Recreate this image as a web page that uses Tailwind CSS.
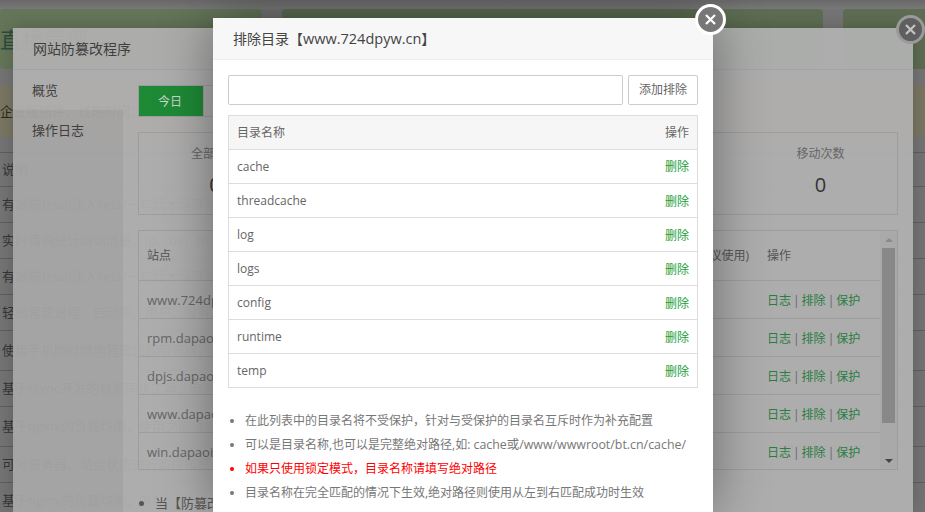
<!DOCTYPE html>
<html>
<head>
  <title>网站防篡改程序</title>
  <script src="https://cdn.jsdelivr.net/npm/@tailwindcss/browser@4"></script>
  <meta name="viewport" content="width=device-width, initial-scale=1.0">
</head>

<body class="relative w-[925px] h-[512px] overflow-hidden bg-[#747474] font-['Open_Sans','Noto_Sans_CJK_SC',sans-serif] text-[12px]">

  <!-- Page behind the dim layer -->
  <div class="w-full">
    <div class="h-[9px] bg-gradient-to-b from-[#686868] to-[#787878]"></div>
    <div class="flex gap-5 h-[60px] text-[#2a4d3a]">
      <div class="w-[262px] shrink-0 rounded bg-[#647559] overflow-hidden text-[22px] pt-[17px] leading-[26px] whitespace-nowrap">直播管理</div>
      <div class="w-[541px] shrink-0 rounded bg-[#5d6c52]"></div>
      <div class="w-[100px] shrink-0 rounded bg-[#5d6c52]"></div>
    </div>
    <div class="mt-4 h-[52px] bg-[#7a7663] text-[#2e2a1c] text-[13px] leading-[52px] whitespace-nowrap">企业版插件，过期时间：2021/05/20</div>
    <div class="text-[13px] text-[#363636] whitespace-nowrap">
      <div class="h-4 border-b border-[#5e5e5e]"></div>
      <div class="h-[34px] leading-[33px] border-b border-[#5e5e5e] pl-0.5">说明</div>
      <div class="h-9 leading-[35px] border-b border-[#5e5e5e] pl-0.5">有效防止sql注入/xss/一句话木马等常见渗透攻击</div>
      <div class="h-9 leading-[35px] border-b border-[#5e5e5e] pl-0.5">实时精确统计网站流量、ip、uv、pv、请求</div>
      <div class="h-9 leading-[35px] border-b border-[#5e5e5e] pl-0.5">有效防止sql注入/xss/一句话木马等常见渗透攻击</div>
      <div class="h-9 leading-[35px] border-b border-[#5e5e5e] pl-0.5">轻松管理进程、启动项、用户、服务、计划任务</div>
      <div class="h-10 leading-[39px] border-b border-[#5e5e5e] pl-0.5">使用手机随时随地管理您的服务器，安全便捷</div>
      <div class="h-9 leading-[35px] border-b border-[#5e5e5e] pl-0.5">基于rsync开发的数据同步工具，支持多节点</div>
      <div class="h-10 leading-[39px] border-b border-[#5e5e5e] pl-0.5">基于nginx的负载均衡，使用之前请先安装nginx</div>
      <div class="h-9 leading-[35px] border-b border-[#5e5e5e] pl-0.5">可对服务器、站点状态进行监控报警</div>
      <div class="h-9 leading-[35px] pl-0.5">基于nginx的负载均衡，0/1</div>
    </div>
  </div>

  <div class="absolute left-[13px] top-[28px] w-[900px] h-[484px] bg-[#b1b1b1]/93 shadow-[0_0_16px_rgba(0,0,0,0.2)] flex flex-col">
    <div class="h-[42px] shrink-0 border-b border-[#a4a4a4] pl-5 leading-[41px] text-[14px] text-[#3f3f3f]">网站防篡改程序</div>
    <div class="flex flex-1 min-h-0">
      <div class="w-[110px] shrink-0 text-[13px] text-[#3f3f3f]">
        <div class="h-10 leading-10 pl-[19px]">概览</div>
        <div class="h-[402px] pl-[19px] leading-10 bg-black/5">操作日志</div>
      </div>
      <div class="flex-1 min-w-0 pl-[15px] pr-[15px] pt-[15px]">
        <div class="flex h-8">
          <div class="w-[66px] pr-0.5 border border-[#9d9d9d] bg-[#1f8a36] text-[#c9d6cb] text-[12px] text-center leading-[32px]">今日</div>
          <div class="w-[66px] border border-[#9d9d9d] border-l-0"></div>
        </div>
        <div class="mt-[15px] h-[83px] border border-[#9d9d9d] flex text-center">
          <div class="w-[152px] pt-[11px]">
            <div class="text-[12px] text-[#666] leading-5">全部次数</div>
            <div class="text-[20px] text-[#333] leading-7 mt-[7px]">0</div>
          </div>
          <div class="flex-1"></div>
          <div class="w-[153px] pt-[11px]">
            <div class="text-[12px] text-[#666] leading-5">移动次数</div>
            <div class="text-[20px] text-[#333] leading-7 mt-[7px]">0</div>
          </div>
        </div>
        <div class="mt-[15px] h-[240px] border border-[#9d9d9d] flex">
          <div class="flex-1 min-w-0 text-[#666]">
            <div class="h-[50px] flex items-center justify-between pl-2 text-[12px] text-[#555] border-b border-[#9d9d9d]">
              <span>站点</span>
              <span class="flex gap-[18px] pr-[20px]"><span>(建议使用)</span><span class="w-[93px]">操作</span></span>
            </div>
            <div class="h-[38px] pt-[3px] flex items-center justify-between pl-2 text-[13px] border-b border-[#9d9d9d]">
              <span>www.724dpyw.cn</span>
              <span class="w-[113px] text-[#2a7d41] text-[12px]">日志<span class="mx-[2px] text-[#666]">|</span>排除<span class="mx-[2px] text-[#666]">|</span>保护</span>
            </div>
            <div class="h-[38px] pt-[3px] flex items-center justify-between pl-2 text-[13px] border-b border-[#9d9d9d]">
              <span>rpm.dapaoit.com</span>
              <span class="w-[113px] text-[#2a7d41] text-[12px]">日志<span class="mx-[2px] text-[#666]">|</span>排除<span class="mx-[2px] text-[#666]">|</span>保护</span>
            </div>
            <div class="h-[38px] pt-[3px] flex items-center justify-between pl-2 text-[13px] border-b border-[#9d9d9d]">
              <span>dpjs.dapaoit.com</span>
              <span class="w-[113px] text-[#2a7d41] text-[12px]">日志<span class="mx-[2px] text-[#666]">|</span>排除<span class="mx-[2px] text-[#666]">|</span>保护</span>
            </div>
            <div class="h-[38px] pt-[3px] flex items-center justify-between pl-2 text-[13px] border-b border-[#9d9d9d]">
              <span>www.dapaoit.com</span>
              <span class="w-[113px] text-[#2a7d41] text-[12px]">日志<span class="mx-[2px] text-[#666]">|</span>排除<span class="mx-[2px] text-[#666]">|</span>保护</span>
            </div>
            <div class="h-9 pt-1 flex items-center justify-between pl-2 text-[13px]">
              <span>win.dapaoit.com</span>
              <span class="w-[113px] text-[#2a7d41] text-[12px]">日志<span class="mx-[2px] text-[#666]">|</span>排除<span class="mx-[2px] text-[#666]">|</span>保护</span>
            </div>
          </div>
          <!-- Scrollbar -->
          <div class="w-[17px] shrink-0 bg-[#a9a9a9] flex flex-col items-center">
            <div class="h-[17px] flex items-center justify-center">
              <svg width="8" height="4" viewBox="0 0 8 4"><path d="M4 0L8 4H0z" fill="#8a8a8a"/></svg>
            </div>
            <div class="w-[13px] h-[175px] bg-[#888888]"></div>
            <div class="flex-1"></div>
            <div class="h-[17px] flex items-center justify-center">
              <svg width="8" height="4" viewBox="0 0 8 4"><path d="M0 0H8L4 4z" fill="#444"/></svg>
            </div>
          </div>
        </div>
        <ul class="mt-6 pl-[17px] list-disc text-[13px] text-[#555]">
          <li>当【防篡改程序】开启后</li>
        </ul>
      </div>
    </div>
  </div>

  <!-- Panel close button -->
  <div class="absolute left-[896px] top-[15px] w-[29px] h-[29px] rounded-full bg-[#5f5f5f] border-[3px] border-[#9a9a9a] flex items-center justify-center">
    <svg width="13" height="13" viewBox="0 0 13 13"><path d="M2 2L11 11M11 2L2 11" stroke="#c4c4c4" stroke-width="2.2"/></svg>
  </div>

  <!-- Exclude directory dialog -->
  <div class="absolute left-[213px] top-[18px] w-[500px] h-[494px] bg-white shadow-[0_0_50px_rgba(0,0,0,0.4)]">
    <div class="h-[42px] bg-[#f7f7f7] border-b border-[#eeeeee] pl-5 leading-[41px] text-[14px] text-[#444]">排除目录【<span class="text-[14.5px]">www.724dpyw.cn</span>】</div>
    <div class="px-[15px] pt-[15px]">
      <div class="flex gap-[5px] h-[30px]">
        <input type="text" class="flex-1 min-w-0 border border-[#cccccc] rounded-[2px]">
        <button class="w-[70px] border border-[#cccccc] rounded-[2px] bg-white text-[#666] text-[12px]">添加排除</button>
      </div>
      <table class="mt-[10px] w-full border border-[#dddddd] border-collapse text-[#666] text-[12px]">
        <thead>
          <tr class="h-[34px] bg-[#f6f6f6] border-b border-[#dddddd]">
            <th class="font-normal text-left pl-2">目录名称</th>
            <th class="font-normal text-right pr-2">操作</th>
          </tr>
        </thead>
        <tbody>
          <tr class="h-[34px] border-b border-[#dddddd]"><td class="pl-2">cache</td><td class="text-right pr-2 text-[#1c9e36]">删除</td></tr>
          <tr class="h-[34px] border-b border-[#dddddd]"><td class="pl-2">threadcache</td><td class="text-right pr-2 pt-0.5 text-[#1c9e36]">删除</td></tr>
          <tr class="h-[34px] border-b border-[#dddddd]"><td class="pl-2">log</td><td class="text-right pr-2 pt-0.5 text-[#1c9e36]">删除</td></tr>
          <tr class="h-[34px] border-b border-[#dddddd]"><td class="pl-2">logs</td><td class="text-right pr-2 pt-0.5 text-[#1c9e36]">删除</td></tr>
          <tr class="h-[34px] border-b border-[#dddddd]"><td class="pl-2">config</td><td class="text-right pr-2 pt-0.5 text-[#1c9e36]">删除</td></tr>
          <tr class="h-[34px] border-b border-[#dddddd]"><td class="pl-2">runtime</td><td class="text-right pr-2 pt-0.5 text-[#1c9e36]">删除</td></tr>
          <tr class="h-[34px]"><td class="pl-2">temp</td><td class="text-right pr-2 pt-0.5 text-[#1c9e36]">删除</td></tr>
        </tbody>
      </table>
      <ul class="mt-[21px] pl-[17px] list-disc text-[12px] leading-6 text-[#777]">
        <li>在此列表中的目录名将不受保护，针对与受保护的目录名互斥时作为补充配置</li>
        <li>可以是目录名称,也可以是完整绝对路径,如: <span class="text-[12.4px]">cache或/www/wwwroot/bt.cn/cache/</span></li>
        <li class="text-[#ff0000]">如果只使用锁定模式，目录名称请填写绝对路径</li>
        <li>目录名称在完全匹配的情况下生效,绝对路径则使用从左到右匹配成功时生效</li>
      </ul>
    </div>
  </div>

  <!-- Dialog close button -->
  <div class="absolute left-[695px] top-[4px] w-[31px] h-[31px] rounded-full bg-[#777777] border-[3px] border-white flex items-center justify-center">
    <svg width="13" height="13" viewBox="0 0 13 13"><path d="M2 2L11 11M11 2L2 11" stroke="#ffffff" stroke-width="2.2"/></svg>
  </div>

</body>
</html>
